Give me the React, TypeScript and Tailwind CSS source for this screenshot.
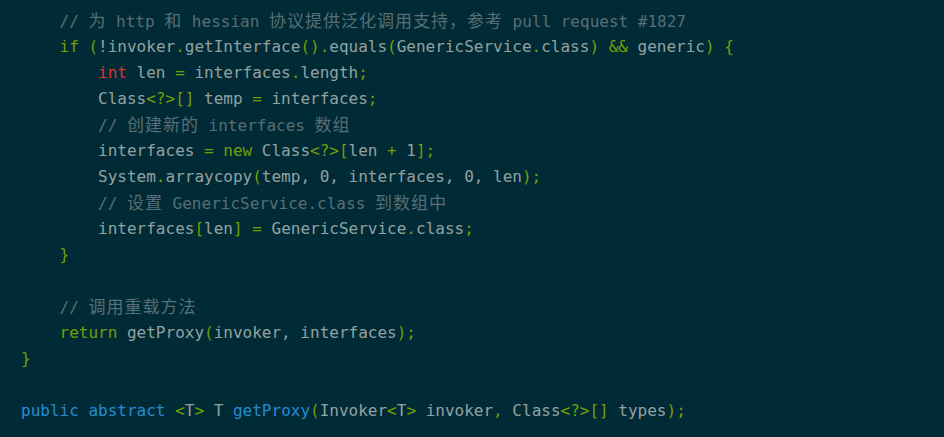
type Tok = [string, string?]

// g: punctuation / keywords, c: comment, r: primitive, b: declaration
const colors: Record<string, string> = {
  g: 'text-[#719e07]',
  c: 'text-[#586e75]',
  r: 'text-[#dc322f]',
  b: 'text-[#268bd2]',
}

const lines: Tok[][] = [
  [['    '], ['// 为 http 和 hessian 协议提供泛化调用支持，参考 pull request #1827', 'c']],
  [['    '], ['if', 'g'], [' '], ['(', 'g'], ['!invoker'], ['.', 'g'], ['getInterface'], ['()', 'g'], ['.', 'g'], ['equals'], ['(', 'g'], ['GenericService'], ['.', 'g'], ['class'], [')', 'g'], [' '], ['&&', 'g'], [' generic'], [')', 'g'], [' '], ['{', 'g']],
  [['        '], ['int', 'r'], [' len '], ['=', 'g'], [' interfaces'], ['.', 'g'], ['length'], [';', 'g']],
  [['        Class'], ['<?>[]', 'g'], [' temp '], ['=', 'g'], [' interfaces'], [';', 'g']],
  [['        '], ['// 创建新的 interfaces 数组', 'c']],
  [['        interfaces '], ['=', 'g'], [' '], ['new', 'g'], [' Class'], ['<?>[', 'g'], ['len '], ['+', 'g'], [' 1'], ['];', 'g']],
  [['        System'], ['.', 'g'], ['arraycopy'], ['(', 'g'], ['temp, 0, interfaces, 0, len'], [');', 'g']],
  [['        '], ['// 设置 GenericService.class 到数组中', 'c']],
  [['        interfaces'], ['[', 'g'], ['len'], [']', 'g'], [' '], ['=', 'g'], [' GenericService'], ['.', 'g'], ['class'], [';', 'g']],
  [['    '], ['}', 'g']],
  [],
  [['    '], ['// 调用重载方法', 'c']],
  [['    '], ['return', 'g'], [' getProxy'], ['(', 'g'], ['invoker, interfaces'], [');', 'g']],
  [['}', 'g']],
  [],
  [['public abstract', 'b'], [' '], ['<', 'g'], ['T'], ['>', 'g'], [' T '], ['getProxy', 'b'], ['(', 'g'], ['Invoker'], ['<', 'g'], ['T'], ['>', 'g'], [' invoker'], [',', 'g'], [' Class'], ['<?>[]', 'g'], [' types'], [');', 'g']],
]

// CJK runs are a bit wider than two mono cells in the original
function Text({ s }: { s: string }) {
  const parts = s.split(/([\u3000-\u9fff\uff00-\uffef]+)/)
  return (
    <>
      {parts.map((p, i) =>
        i % 2 === 1 ? (
          <span key={i} className="text-[17px] tracking-[1px]">{p}</span>
        ) : (
          p
        )
      )}
    </>
  )
}

export default function App() {
  return (
    <div className="w-[944px] h-[437px] bg-[#002b36] overflow-hidden pt-2 pl-[21px]">
      <pre
        className="text-[16px] leading-[26px] text-[#93a1a1] whitespace-pre"
        style={{ fontFamily: '"DejaVu Sans Mono", "Noto Sans CJK SC", monospace' }}
      >
        {lines.map((line, i) => (
          <div key={i} className="h-[26px]">
            {line.map(([text, kind], j) => (
              <span key={j} className={kind ? colors[kind] : undefined}>
                <Text s={text} />
              </span>
            ))}
          </div>
        ))}
      </pre>
    </div>
  )
}
